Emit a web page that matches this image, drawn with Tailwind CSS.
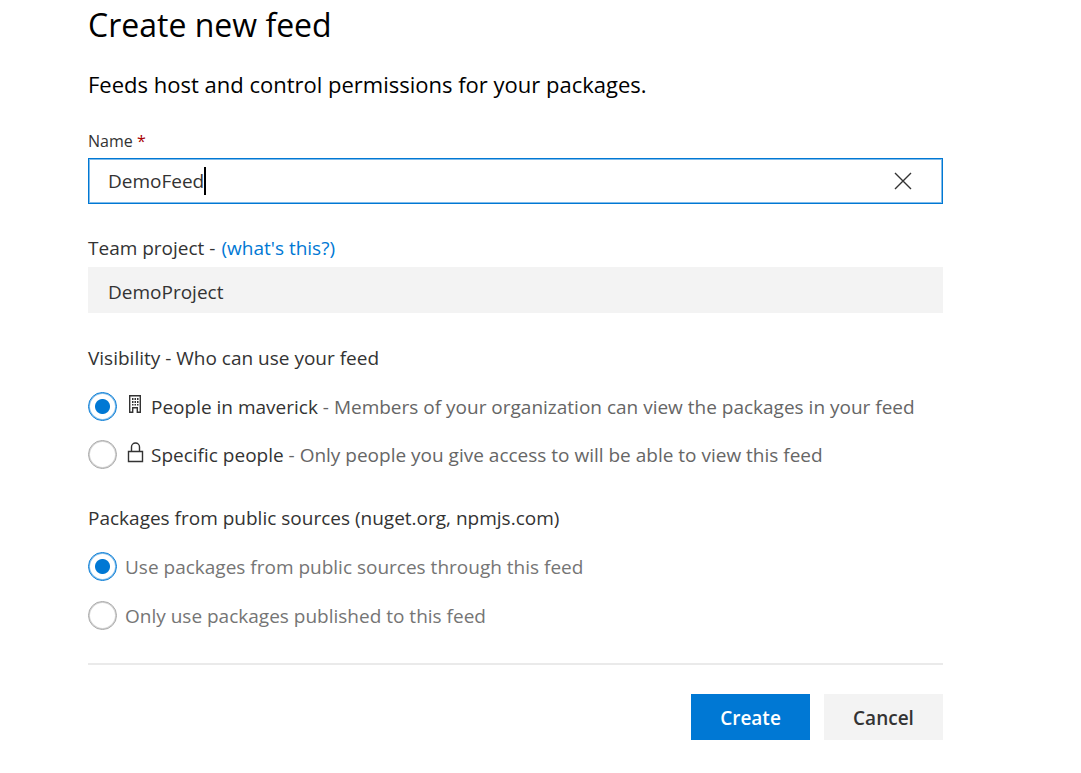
<!DOCTYPE html>
<html lang="en">
<head>
<meta charset="utf-8">
<meta name="viewport" content="width=device-width, initial-scale=1">
<title>Create new feed</title>
<script src="https://cdn.jsdelivr.net/npm/@tailwindcss/browser@4"></script>
</head>
<body class="bg-white font-['Open_Sans','Noto_Sans',sans-serif] text-[#333]">
<main class="pt-1 pr-[138px] pb-8 pl-[88px] text-[19px] leading-[26px]">
  <h1 class="text-[32px] leading-[42px] text-black">Create new feed</h1>
  <p class="mt-6 text-[22px] leading-[28px] text-black">Feeds host and control permissions for your packages.</p>
  <form>
    <label for="name" class="mt-8 block text-[16px] leading-[22px]">Name <span class="text-[#a80000]">*</span></label>
    <div class="mt-[6px] flex h-[46px] items-center border border-[#0078d4] pr-[29px] pl-[19px] ring-1 ring-[#80bbe9] ring-inset">
      <input id="name" type="text" value="DemoFeed" class="field-sizing-content caret-transparent outline-none">
      <span class="h-7 w-[2px] bg-black" aria-hidden="true"></span>
      <button type="button" aria-label="Clear name" class="ml-auto"><svg class="size-5" viewBox="0 0 20 20" fill="none" stroke="#333" stroke-width="1.4"><path d="M2 2l16 16M18 2L2 18"/></svg></button>
    </div>
    <div class="mt-[31px] flex gap-[6px]"><label for="project">Team project -</label><a href="#" class="text-[#0078d4]">(what's this?)</a></div>
    <input id="project" type="text" value="DemoProject" readonly class="mt-[6px] block h-[46px] w-full bg-[#f3f3f3] px-5 pt-1 outline-none">

    <fieldset class="mt-8">
      <legend>Visibility - Who can use your feed</legend>
      <div class="mt-[21px] flex flex-col gap-[19px]">
        <label class="flex items-center">
          <input type="radio" name="visibility" checked class="size-[29px] shrink-0 appearance-none rounded-full border border-[#a6a6a6] ring-1 ring-[#a6a6a6]/50 ring-inset checked:border-[#0078d4] checked:bg-[radial-gradient(circle,#0078d4_7px,transparent_8px)] checked:ring-[#0078d4]/50">
          <svg class="ml-2 h-[25px] w-5 shrink-0" viewBox="0 0 20 25" fill="none" stroke="#333"><path d="M4.700 1.700h10.600v16.600h-3v-4.600h-4.600v4.600h-3z" stroke-width="1.400"/><path fill="#333" stroke="none" d="M7 4h1.500v2H7zM9.500 4H11v2H9.500zM12 4h1.500v2H12zM7 7h1.500v2H7zM9.500 7H11v2H9.500zM12 7h1.500v2H12zM7 10h1.500v1.500H7zM9.500 10H11v1.500H9.500zM12 10h1.500v1.500H12z"/></svg>
          <span class="ml-[6px]">People in maverick <span class="text-[#666]">- Members of your organization can view the packages in your feed</span></span>
        </label>
        <label class="flex items-center">
          <input type="radio" name="visibility" class="size-[29px] shrink-0 appearance-none rounded-full border border-[#a6a6a6] ring-1 ring-[#a6a6a6]/50 ring-inset checked:border-[#0078d4] checked:bg-[radial-gradient(circle,#0078d4_7px,transparent_8px)] checked:ring-[#0078d4]/50">
          <svg class="ml-2 h-[25px] w-5 shrink-0" viewBox="0 0 20 25" fill="none" stroke="#333" stroke-width="1.4"><path d="M3.500 9.500h14v10h-14zM6.500 9.500V5a4 4 0 0 1 8 0v4.500"/></svg>
          <span class="ml-[6px]">Specific people <span class="text-[#666]">- Only people you give access to will be able to view this feed</span></span>
        </label>
      </div>
    </fieldset>

    <fieldset class="mt-9">
      <legend>Packages from public sources (nuget.org, npmjs.com)</legend>
      <div class="mt-[21px] flex flex-col gap-5 text-[#757575]">
        <label class="flex items-center gap-2">
          <input type="radio" name="sources" checked class="size-[29px] shrink-0 appearance-none rounded-full border border-[#a6a6a6] ring-1 ring-[#a6a6a6]/50 ring-inset checked:border-[#0078d4] checked:bg-[radial-gradient(circle,#0078d4_7px,transparent_8px)] checked:ring-[#0078d4]/50">
          <span>Use packages from public sources through this feed</span>
        </label>
        <label class="flex items-center gap-2">
          <input type="radio" name="sources" class="size-[29px] shrink-0 appearance-none rounded-full border border-[#a6a6a6] ring-1 ring-[#a6a6a6]/50 ring-inset checked:border-[#0078d4] checked:bg-[radial-gradient(circle,#0078d4_7px,transparent_8px)] checked:ring-[#0078d4]/50">
          <span>Only use packages published to this feed</span>
        </label>
      </div>
    </fieldset>

    <div class="mt-[33px] flex justify-end gap-[14px] border-t-2 border-[#eaeaea] pt-[29px] font-semibold">
      <button type="submit" class="h-[46px] w-[119px] bg-[#0078d4] pt-[2px] text-white">Create</button>
      <button type="button" class="h-[46px] w-[119px] bg-[#f3f3f3] pt-[2px]">Cancel</button>
    </div>
  </form>
</main>
</body>
</html>
